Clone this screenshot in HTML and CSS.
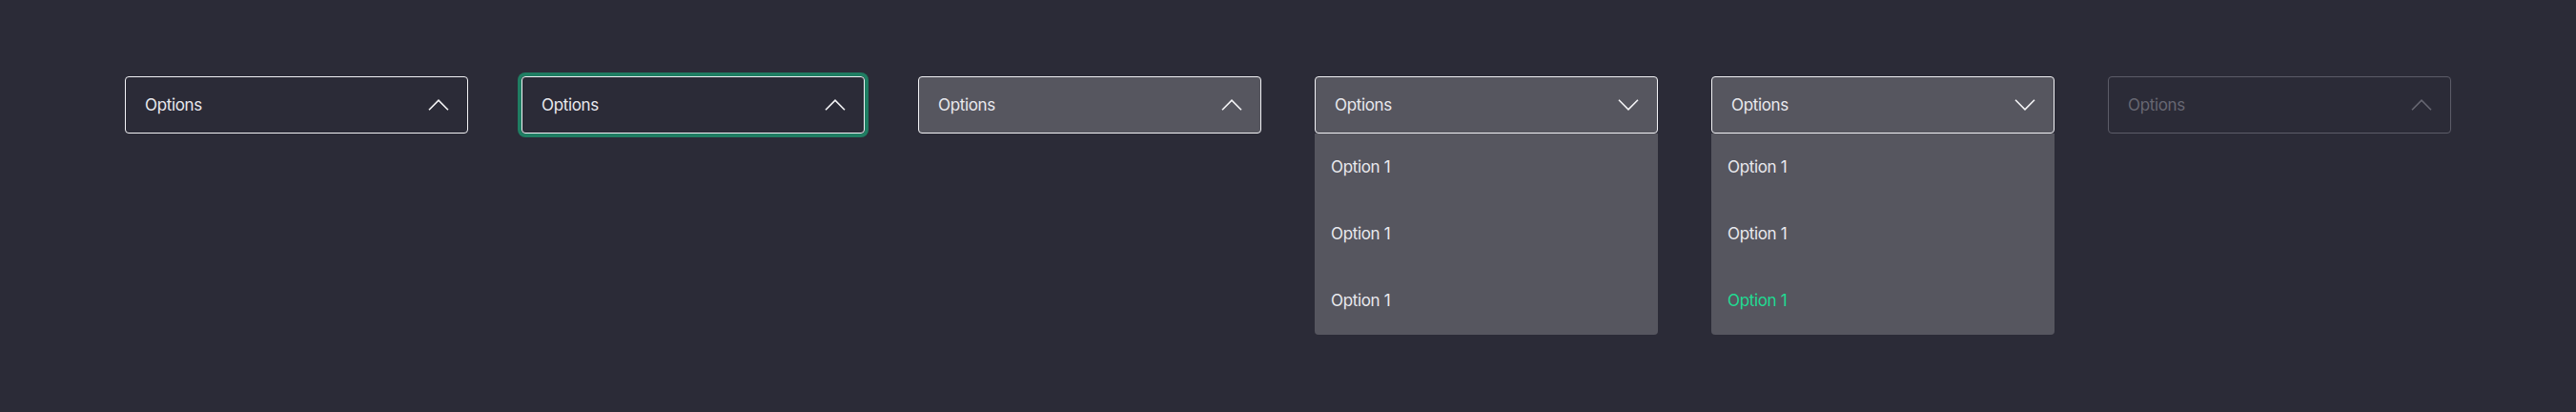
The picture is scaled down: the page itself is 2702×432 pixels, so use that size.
FILE: index.html
```html
<!DOCTYPE html>
<html>
<head>
<meta charset="utf-8">
<link rel="stylesheet" href="styles.css">
</head>
<body>
<div class="row">
  <div class="select">
    <div class="head">
      <span>Options</span>
      <svg class="chev" width="22" height="12" viewBox="0 0 22 12"><path d="M1 11.2 L11 1.2 L21 11.2" fill="none" stroke="currentColor" stroke-width="1.6"/></svg>
    </div>
  </div>
  <div class="select">
    <div class="head focus">
      <span>Options</span>
      <svg class="chev" width="22" height="12" viewBox="0 0 22 12"><path d="M1 11.2 L11 1.2 L21 11.2" fill="none" stroke="currentColor" stroke-width="1.6"/></svg>
    </div>
  </div>
  <div class="select">
    <div class="head filled">
      <span>Options</span>
      <svg class="chev" width="22" height="12" viewBox="0 0 22 12"><path d="M1 11.2 L11 1.2 L21 11.2" fill="none" stroke="currentColor" stroke-width="1.6"/></svg>
    </div>
  </div>
  <div class="select">
    <div class="head filled">
      <span>Options</span>
      <svg class="chev" width="22" height="12" viewBox="0 0 22 12"><path d="M1 0.8 L11 10.8 L21 0.8" fill="none" stroke="currentColor" stroke-width="1.6"/></svg>
    </div>
    <ul class="list">
      <li class="opt">Option 1</li>
      <li class="opt">Option 1</li>
      <li class="opt">Option 1</li>
    </ul>
  </div>
  <div class="select">
    <div class="head filled">
      <span>Options</span>
      <svg class="chev" width="22" height="12" viewBox="0 0 22 12"><path d="M1 0.8 L11 10.8 L21 0.8" fill="none" stroke="currentColor" stroke-width="1.6"/></svg>
    </div>
    <ul class="list">
      <li class="opt">Option 1</li>
      <li class="opt">Option 1</li>
      <li class="opt active">Option 1</li>
    </ul>
  </div>
  <div class="select">
    <div class="head disabled">
      <span>Options</span>
      <svg class="chev" width="22" height="12" viewBox="0 0 22 12"><path d="M1 11.2 L11 1.2 L21 11.2" fill="none" stroke="currentColor" stroke-width="1.6"/></svg>
    </div>
  </div>
</div>
</body>
</html>
```
FILE: styles.css
```css
html, body {
  margin: 0;
  padding: 0;
  background: #2b2b37;
}
body {
  width: 2702px;
  height: 432px;
  overflow: hidden;
  font-family: "Inter", "Liberation Sans", sans-serif;
  color: #e9e9ee;
}
.row {
  display: flex;
  justify-content: center;
  align-items: flex-start;
  gap: 56px;
  padding-top: 80px;
}
.select {
  width: 360px;
  display: flex;
  flex-direction: column;
}
.head {
  box-sizing: border-box;
  height: 60px;
  border: 1px solid #f2f2f5;
  border-radius: 4px;
  display: flex;
  align-items: center;
  justify-content: space-between;
  padding: 0 19px 0 20px;
  font-size: 17px;
  letter-spacing: -0.35px;
}
.head.focus {
  box-shadow: 0 0 0 4px #1f7d62;
}
.head.filled {
  background: #56565f;
}
.head.disabled {
  border-color: #5c5c68;
  color: #676772;
}
.chev {
  display: block;
  color: #f4f4f6;
}
.disabled .chev {
  color: #676772;
}
.list {
  list-style: none;
  margin: 0;
  padding: 0 0 1px;
  background: #56565f;
  border-radius: 0 0 4px 4px;
}
.opt {
  height: 70px;
  display: flex;
  align-items: center;
  padding-left: 17px;
  font-size: 17px;
  letter-spacing: -0.35px;
  color: #e9e9ee;
}
.opt.active {
  color: #1fdb92;
}
```
